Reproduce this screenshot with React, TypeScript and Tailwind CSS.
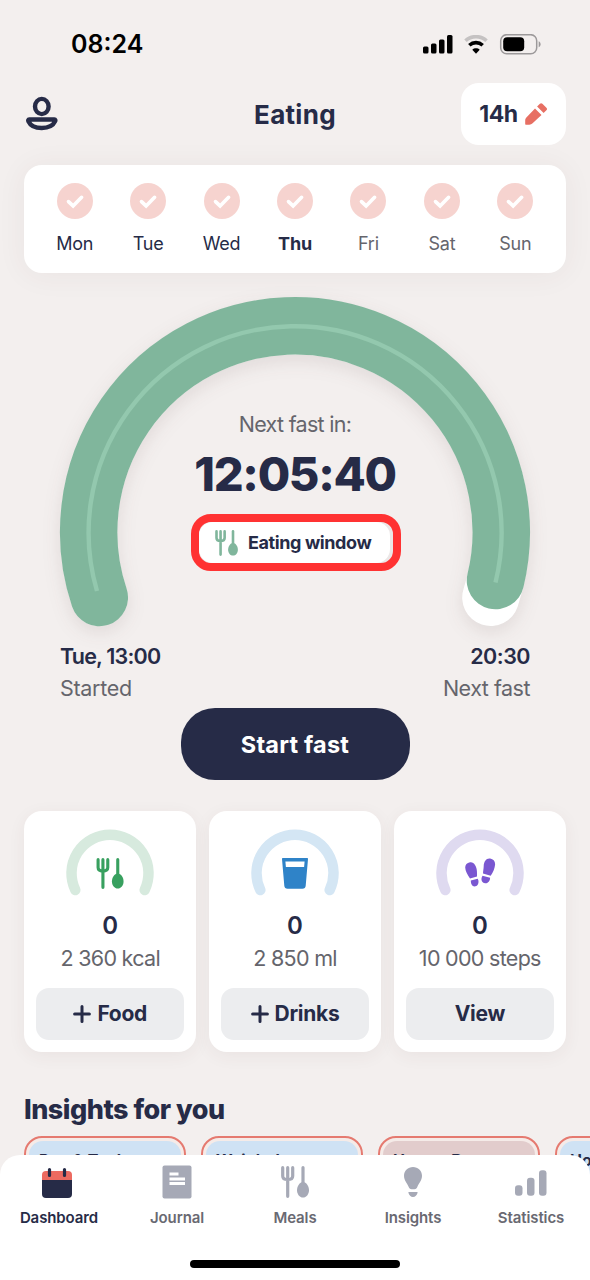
import type { ReactNode } from "react";

type Day = { label: string; tone: string };

const days: Day[] = [
  { label: "Mon", tone: "text-[#262b47]" },
  { label: "Tue", tone: "text-[#262b47]" },
  { label: "Wed", tone: "text-[#262b47]" },
  { label: "Thu", tone: "text-[#262b47] font-bold" },
  { label: "Fri", tone: "text-[#65656c]" },
  { label: "Sat", tone: "text-[#65656c]" },
  { label: "Sun", tone: "text-[#65656c]" },
];

const insights = [
  { title: "Dos & Tools", bg: "bg-[#cfe2f4]" },
  { title: "Weight loss", bg: "bg-[#cfe2f4]" },
  { title: "How to Boost", bg: "bg-[#e2cccc]" },
  { title: "Ho", bg: "bg-[#cfe2f4]" },
];

function Cutlery({ className }: { className: string }) {
  return (
    <svg viewBox="0 0 28 32" className={className} fill="none" stroke="currentColor">
      <path d="M1.700 1.700v8.200c0 2.300 1.600 3.600 5 3.600s5-1.300 5-3.600V1.700M6.700 1.700v28.600" strokeWidth="3.200" strokeLinecap="round" />
      <path d="M22 1.700v16" strokeWidth="3.200" strokeLinecap="round" />
      <path d="M22 16c3.400 0 6 4.300 6 8.200 0 4-2.700 7.300-6 7.300s-6-3.300-6-7.300c0-3.900 2.600-8.200 6-8.200Z" fill="currentColor" stroke="none" />
    </svg>
  );
}

function Cup() {
  return (
    <svg viewBox="0 0 26 31" className="h-[31px] w-[26px]" fill="#2f83c8">
      <path fillRule="evenodd" d="M.8 0h24.400a.8.8 0 0 1 .8.900L23.700 27.700A3.300 3.300 0 0 1 20.400 30.700H5.600a3.300 3.300 0 0 1-3.300-3L0 .9A.8.8 0 0 1 .8 0ZM3.400 3.500l.5 5.500h18.200l.5-5.500Z" />
    </svg>
  );
}

function Steps() {
  return (
    <svg viewBox="0 0 32 30" className="h-[30px] w-8" fill="#7a57d1">
      <path d="M6 4.200c3.800-.7 6.600 3.600 6.900 8.800.1 2 .2 3.700.1 5.500l-7 2.100C3.600 17 1.300 13.200 1.200 9.600 1.100 6.700 3 4.700 6 4.200Z" />
      <path d="m6.800 22.600 6.900-1.900c1.400 2.200 1.100 5.900-1.400 7.300-3.100 1.600-5.500-1-5.500-5.400Z" />
      <path d="M26.200.6c-3.700-.7-6.400 2.900-6.500 7.600-.1 2.900-.7 5.200-.7 7.400l7.700 2.100c2.500-3.200 4.100-7.600 4.400-11.100C31.300 3.200 29.200 1.200 26.200.6Z" />
      <path d="m18.500 17.700 7.600 2c.1 3.500-2.900 6.300-5.800 5.400-2.900-1-3.700-4.300-1.800-7.400Z" />
    </svg>
  );
}

function MiniGauge({ color, children }: { color: string; children: ReactNode }) {
  return (
    <div className="grid h-[68px] w-[88px] justify-items-center">
      <svg viewBox="0 0.7 88 68" className="col-start-1 row-start-1 h-[68px] w-[88px] overflow-visible" fill="none">
        <path d="M9.300 60.700A38.500 38.500 0 1 1 78.700 60.700" stroke={color} strokeWidth="10.500" strokeLinecap="round" />
      </svg>
      <div className="col-start-1 row-start-1 pt-7">{children}</div>
    </div>
  );
}

function Plus() {
  return (
    <svg viewBox="0 0 18 18" className="size-[18px]" stroke="#262b47" strokeWidth="3" strokeLinecap="round">
      <path d="M9 1.600v14.800M1.600 9h14.800" />
    </svg>
  );
}

function StatCard(props: { color: string; icon: ReactNode; value: string; goal: string; action: string; plus?: boolean }) {
  return (
    <article className="flex h-[241px] flex-1 flex-col items-center rounded-[18px] bg-white px-3 pt-[19px] shadow-[0_4px_18px_rgba(80,50,50,0.06)]">
      <MiniGauge color={props.color}>{props.icon}</MiniGauge>
      <div className="mt-3 text-2xl leading-8 font-semibold">{props.value}</div>
      <div className="text-[21.5px] leading-8 tracking-[-0.7px] whitespace-nowrap text-[#65656c]">{props.goal}</div>
      <button className="mt-[14px] flex h-[52px] w-full items-center justify-center gap-[6px] rounded-[13px] bg-[#ecedef] text-[21px] font-bold tracking-[-0.3px]">
        {props.plus ? <Plus /> : null}
        {props.action}
      </button>
    </article>
  );
}

function StatusBar() {
  return (
    <div className="flex h-[83px] items-center justify-between pt-[6px] pr-[49px] pl-[71px] text-black">
      <div className="text-[25px] font-semibold">08:24</div>
      <div className="flex items-center gap-[11px]">
        <svg viewBox="0 0 30 20" className="h-5 w-[30px]">
          <rect x="0" y="11.5" width="5.500" height="7" rx="1.500" />
          <rect x="8" y="8.500" width="5.500" height="10" rx="1.500" />
          <rect x="16" y="4.500" width="5.500" height="14" rx="1.500" />
          <rect x="24" y="0" width="5.500" height="18.500" rx="1.500" />
        </svg>
        <svg viewBox="0 0.500 24 20" className="h-5 w-6" fill="none" strokeWidth="3.600">
          <path d="M1.500 6.200C7 .8 17 .8 22.500 6.200" stroke="#c5c2c2" />
          <path d="M5.300 10.800c3.900-3.600 9.500-3.600 13.400 0" stroke="#000" />
          <path d="m12 19.200-3.700-4c2-1.900 5.400-1.900 7.400 0Z" fill="#000" />
        </svg>
        <svg viewBox="-0.7 0.800 42 22" className="h-[22px] w-[42px]">
          <rect x="1" y="1.500" width="36" height="19" rx="6" fill="none" stroke="#9c999a" strokeWidth="1.500" />
          <rect x="3.500" y="4" width="21" height="14" rx="4" />
          <path d="M39 8v6c2.500-1 2.500-5 0-6Z" fill="#9c999a" />
        </svg>
      </div>
    </div>
  );
}

function Header() {
  return (
    <header className="grid h-[62px] grid-cols-[1fr_auto_1fr] items-center px-6">
      <svg viewBox="0 0 36 36" className="size-9" fill="none" stroke="#262b47" strokeWidth="4.400">
        <ellipse cx="17.800" cy="10.500" rx="6.800" ry="7.600" />
        <path d="M5.200 23.500h25.200c1 0 1.200.8.800 1.700-1.900 4.100-6.700 6.800-13.400 6.800S6.300 29.300 4.400 25.200c-.4-.9-.2-1.700.8-1.700Z" />
      </svg>
      <h1 className="text-[26px] font-bold tracking-[0.3px]">Eating</h1>
      <button className="flex h-[62px] w-[105px] items-center justify-center gap-[7px] justify-self-end rounded-[18px] bg-white pr-px text-[23px] font-bold tracking-[-0.5px]">
        14h
        <svg viewBox="0 0 22 22" className="size-[22px]" fill="#e76f63">
          <path d="M10 5.500 16.500 12 7.600 20.300c-.9.900-2 1.400-3.300 1.400H.8c-.4 0-.6-.2-.6-.6v-3.600c0-1.300.5-2.400 1.400-3.300Z" />
          <path d="m12.100 3.500 2.800-2.700a1.800 1.800 0 0 1 2.500 0l4 4a1.800 1.800 0 0 1 0 2.500l-2.800 2.700Z" />
        </svg>
      </button>
    </header>
  );
}

function Week() {
  return (
    <section className="mx-6 mt-5 grid h-[108px] grid-cols-7 rounded-[18px] bg-white px-[14px] pt-[18px] shadow-[0_2px_30px_rgba(80,50,50,0.06)]">
      {days.map((d) => (
        <div key={d.label} className="flex flex-col items-center">
          <svg viewBox="0 0 36 36" className="size-9 shrink-0" fill="none">
            <circle cx="18" cy="18" r="18" fill="#f6d3cf" />
            <path d="m11.500 18.600 4.600 4.300 8.500-8.600" stroke="#fff" strokeWidth="3.600" strokeLinecap="round" strokeLinejoin="miter" />
          </svg>
          <span className={`mt-3 text-lg leading-[26px] tracking-[-0.2px] ${d.tone}`}>{d.label}</span>
        </div>
      ))}
    </section>
  );
}

function FastingGauge() {
  return (
    <section className="grid h-[435px]">
      <svg viewBox="0 273.5 590 370" className="col-start-1 row-start-1 h-[370px] w-[590px] overflow-visible" fill="none" strokeLinecap="round">
        <g className="drop-shadow-[0_6px_9px_rgba(70,40,40,0.1)]">
          <path d="M99.300 598A206.300 206.300 0 1 1 490.700 598" stroke="#fff" strokeWidth="57" />
          <path d="M99.300 598A206.300 206.300 0 1 1 495.500 581" stroke="#80b69c" strokeWidth="57.500" />
        </g>
        <path d="M97 591.500A206.500 206.500 0 1 1 495.500 583" stroke="#93c8ae" strokeWidth="4.400" strokeLinecap="butt" />
      </svg>
      <div className="col-start-1 row-start-1 flex flex-col items-center">
        <p className="mt-[135px] text-[21.5px] leading-8 tracking-[-0.7px] text-[#65656c]">Next fast in:</p>
        <p className="mt-2 text-[47px] leading-[52px] font-extrabold tracking-[-1.3px]">12:05:40</p>
        <div className="mt-[14px] ml-0.5 flex h-[57px] w-[210px] rounded-[20px] border-8 border-[#ff3232] bg-[#ebe7e7]">
          <div className="flex h-full w-[191px] items-center rounded-[14px] bg-white pl-4 text-[#80b69c]">
            <Cutlery className="h-[26px] w-[23px]" />
            <span className="ml-[10px] text-[18px] font-bold tracking-[-0.4px] whitespace-nowrap text-[#262b47]">Eating window</span>
          </div>
        </div>
        <div className="mt-[69px] flex w-full justify-between px-[60px] text-[21.5px] leading-8">
          <div>
            <p className="font-semibold tracking-[-0.8px]">Tue, 13:00</p>
            <p className="tracking-[-0.3px] text-[#65656c]">Started</p>
          </div>
          <div className="text-right tracking-[-0.5px]">
            <p className="font-semibold">20:30</p>
            <p className="text-[#65656c]">Next fast</p>
          </div>
        </div>
      </div>
    </section>
  );
}

function NavItem({ label, active, children }: { label: string; active?: boolean; children: ReactNode }) {
  return (
    <button className={`flex flex-col items-center ${active ? "text-[#262b47]" : "text-[#696972]"}`}>
      <span className="flex h-9 items-center justify-center pr-px text-[#a6a9b6]">{children}</span>
      <span className="mt-[6px] text-[15px] leading-6 font-semibold tracking-[-0.1px]">{label}</span>
    </button>
  );
}

function TabBar() {
  return (
    <nav className="absolute inset-x-0 bottom-0 h-[125px] rounded-t-[20px] bg-white pt-[9px]">
      <div className="grid h-[96px] grid-cols-5 items-start">
        <NavItem label="Dashboard" active>
          <svg viewBox="0 0 32 32" className="mt-px mr-1 size-8">
            <path d="M5 4h22a4 4 0 0 1 4 4v6H1V8a4 4 0 0 1 4-4Z" fill="#ec6a60" />
            <path d="M1 13h30v14a4 4 0 0 1-4 4H5a4 4 0 0 1-4-4Z" fill="#262b47" />
            <path d="M8.500 2.500v6M23.500 2.500v6" stroke="#262b47" strokeWidth="3.200" strokeLinecap="round" />
          </svg>
        </NavItem>
        <NavItem label="Journal">
          <svg viewBox="0.5 0.5 30 34" className="h-[34px] w-[30px]">
            <rect x="1" y="1" width="29" height="33" rx="2" fill="currentColor" />
            <path d="M8 9.500h9M8 14.500h15.500M8 19h15.500" stroke="#fff" strokeWidth="3" />
          </svg>
        </NavItem>
        <NavItem label="Meals">
          <Cutlery className="h-8 w-7" />
        </NavItem>
        <NavItem label="Insights">
          <svg viewBox="0 0 18 30" className="h-[30px] w-[18px]" fill="currentColor">
            <path d="M9 0c5 0 9 3.800 9 8.800 0 5-3.300 7.200-4.600 11-.5 1.600-1.400 2.500-3 2.500H7.600c-1.600 0-2.500-.9-3-2.500C3.300 16 0 13.800 0 8.800 0 3.800 4 0 9 0Z" />
            <path d="M5 25h8c.6 0 .7.500.5 1-.6 2.300-2.200 4-4.500 4s-3.900-1.700-4.500-4c-.2-.5-.1-1 .5-1Z" />
          </svg>
        </NavItem>
        <NavItem label="Statistics">
          <svg viewBox="0 0.700 32 28" className="mt-[3px] h-7 w-8" fill="currentColor">
            <rect x="0" y="16" width="7.500" height="10.500" rx="3" />
            <rect x="12" y="8.500" width="7.500" height="18" rx="3" />
            <rect x="24" y="1" width="7.500" height="25.500" rx="3" />
          </svg>
        </NavItem>
      </div>
      <div className="mx-auto h-2 w-[210px] rounded-full bg-black" />
    </nav>
  );
}

export default function App() {
  return (
    <main className="relative h-[1280px] w-[590px] overflow-hidden bg-[#f3efee] font-['Inter','Liberation_Sans',sans-serif] text-[#262b47]">
      <StatusBar />
      <Header />
      <Week />
      <FastingGauge />
      <button className="mx-auto block h-[72px] w-[229px] rounded-[34px] bg-[#262b47] pt-px text-[23.5px] font-bold tracking-[0.2px] text-white">
        Start fast
      </button>

      <section className="mx-6 mt-[31px] flex gap-[12.5px]">
        <StatCard color="#d7eade" icon={<Cutlery className="h-[31px] w-7 text-[#38a05f]" />} value="0" goal="2 360 kcal" action="Food" plus />
        <StatCard color="#d4e6f4" icon={<Cup />} value="0" goal="2 850 ml" action="Drinks" plus />
        <StatCard color="#dfdaf0" icon={<Steps />} value="0" goal="10 000 steps" action="View" />
      </section>

      <section className="mt-[42px] pl-6">
        <h2 className="text-[27px] leading-8 font-extrabold tracking-[-0.5px]">Insights for you</h2>
        <div className="mt-[10px] flex gap-[15px]">
          {insights.map((item) => (
            <article key={item.title} className="h-40 w-[162px] shrink-0 rounded-[18px] border-2 border-[#e57a70] bg-[#f5ebe8] p-[3px]">
              <div className={`h-full rounded-[14px] pt-[7px] pl-[10px] text-[16px] leading-6 font-bold ${item.bg}`}>{item.title}</div>
            </article>
          ))}
        </div>
      </section>

      <TabBar />
    </main>
  );
}
